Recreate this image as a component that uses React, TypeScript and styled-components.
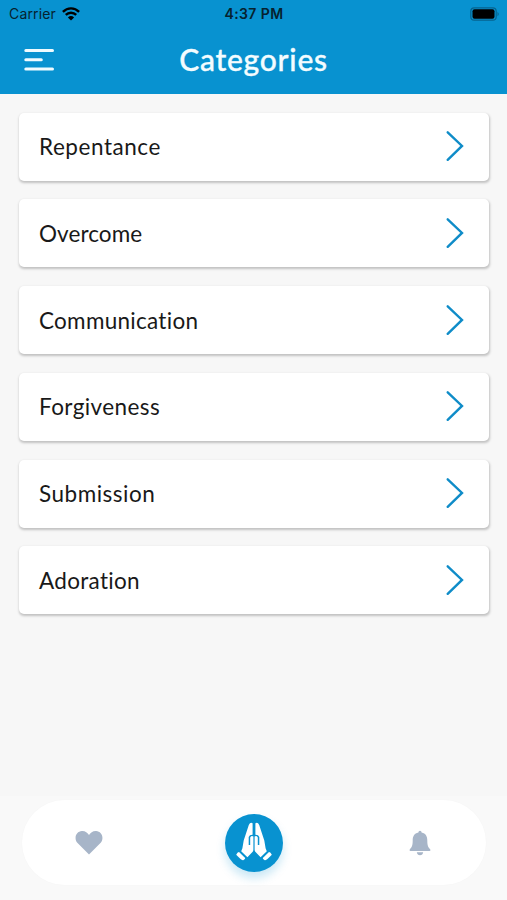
import React from 'react';
import styled, { createGlobalStyle } from 'styled-components';

const GlobalStyle = createGlobalStyle`
  * { box-sizing: border-box; }
  body { margin: 0; background: #f7f7f7; }
`;

const Screen = styled.div`
  display: flex;
  flex-direction: column;
  width: 100%;
  height: 900px;
  background: #f7f7f7;
  font-family: Lato, sans-serif;
  overflow: hidden;
`;

const Header = styled.header`
  height: 93.5px;
  flex: none;
  background: #0892d0;
`;

const StatusBar = styled.div`
  display: grid;
  grid-template-columns: 1fr auto 1fr;
  align-items: center;
  height: 27px;
  padding: 0 8px 0 9px;
  font-family: Inter, sans-serif;
  color: #06222f;
`;

const Carrier = styled.div`
  display: flex;
  align-items: center;
  gap: 6px;
  font-size: 14px;
  letter-spacing: 0.15px;
`;

const Clock = styled.div`
  font-size: 14px;
  font-weight: 600;
  letter-spacing: 0.42px;
`;

const BatteryIcon = styled.svg`
  justify-self: end;
`;

const TitleBar = styled.div`
  display: grid;
  grid-template-columns: 60px 1fr 60px;
  align-items: center;
  height: 65px;
`;

const MenuButton = styled.button`
  display: flex;
  padding: 0 0 0 24px;
  border: 0;
  background: none;
`;

const Title = styled.h1`
  margin: 0;
  padding-bottom: 1px;
  text-align: center;
  color: #f3fcff;
  font-size: 30px;
  line-height: 36px;
  font-weight: 500;
  letter-spacing: 0.75px;
  -webkit-text-stroke: 0.35px #f3fcff;
`;

const List = styled.main`
  display: flex;
  flex: 1;
  flex-direction: column;
  gap: 18.75px;
  padding: 19px 18.5px 0 19px;
`;

const Card = styled.div`
  display: flex;
  align-items: center;
  justify-content: space-between;
  height: 68px;
  flex: none;
  padding: 0 24px 1px 20px;
  border-radius: 5px;
  background: #fff;
  box-shadow: 0.5px 1.5px 2.5px rgba(0, 0, 0, 0.22);
`;

const Label = styled.span<{ $tracking: number }>`
  padding-top: 2px;
  color: #191919;
  font-size: 22.5px;
  line-height: 28px;
  letter-spacing: ${(p) => p.$tracking}px;
`;

const Footer = styled.footer`
  height: 104px;
  flex: none;
  padding: 4px 21px 0 22px;
  background: #f9f9f9;
`;

const TabBar = styled.nav`
  display: grid;
  grid-template-columns: 134px 1fr 133px;
  align-items: center;
  justify-items: center;
  height: 85px;
  border-radius: 43px;
  background: #fff;
  box-shadow: 0 0 2px rgba(0, 0, 0, 0.025);
`;

const PrayButton = styled.div`
  display: flex;
  width: 58px;
  height: 58px;
  margin-right: 1px;
  border-radius: 50%;
  background: #0892d0;
  box-shadow: 0 6px 10px rgba(8, 146, 208, 0.22);
`;

const categories = [
  { name: 'Repentance', tracking: 0.55 },
  { name: 'Overcome', tracking: 0.08 },
  { name: 'Communication', tracking: 0.28 },
  { name: 'Forgiveness', tracking: 0.4 },
  { name: 'Submission', tracking: 0.5 },
  { name: 'Adoration', tracking: 0.3 },
];

const Wifi = () => (
  <svg width="18" height="14" viewBox="0 0 18 14">
    <g fill="none" stroke="#000" strokeWidth="2.4">
      <path d="M.9 4.8C5.5.2 12.500.2 17.100 4.800" />
      <path d="M3.800 7.900C6.700 5 11.300 5 14.200 7.900" />
    </g>
    <path d="M9 13.500 5.900 10.400Q9 7.700 12.100 10.400Z" fill="#000" />
  </svg>
);

const Battery = () => (
  <BatteryIcon width="30" height="14" viewBox="0 0 30 14">
    <rect x="1.800" y=".8" width="25.400" height="12.400" rx="3.500" fill="none" stroke="#06638e" strokeWidth="1.200" />
    <rect x="3.500" y="2.300" width="22" height="9.400" rx="2" fill="#000" />
    <path d="M28.500 4.700Q31 7 28.500 9.300Z" fill="#06638e" />
  </BatteryIcon>
);

const Chevron = () => (
  <svg width="20" height="32" viewBox="0 0 20 32">
    <path d="M2.700 2.300 17 15.900 2.700 29.800" fill="none" stroke="#0f8cc8" strokeWidth="2.400" strokeLinecap="round" strokeLinejoin="miter" />
  </svg>
);

const Praying = () => (
  <svg width="58" height="58" viewBox="0 0 58 58">
    <g fill="#fff">
      <path d="M27.600 9.200Q25.200 8 23.800 11L18.700 26.500 17.400 34.200 16.200 37.200 22.400 43.300 27.700 37.700Q28.400 37 28.400 35.500V22.500Q26.400 21.300 25.200 23.500V31H23.700V23Q24.500 20.600 27.600 20.700Z" />
      <path d="M30.400 9.200Q32.800 8 34.200 11L39.300 26.500 40.600 34.200 41.800 37.200 35.600 43.300 30.300 37.700Q29.600 37 29.600 35.500V22.500Q31.600 21.300 32.800 23.500V31H34.300V23Q33.500 20.600 30.400 20.700Z" />
      <path d="M11.200 40.700Q12.700 37.600 14.300 38.200L20.200 43.900Q20.600 44.900 18.200 46.300 16.800 46.600 11.200 40.700Z" />
      <path d="M46.800 40.700Q45.300 37.600 43.700 38.200L37.800 43.900Q37.400 44.900 39.800 46.300 41.200 46.600 46.800 40.700Z" />
    </g>
  </svg>
);

export default function App() {
  return (
    <>
      <GlobalStyle />
      <Screen>
        <Header>
          <StatusBar>
            <Carrier>Carrier<Wifi /></Carrier>
            <Clock>4:37 PM</Clock>
            <Battery />
          </StatusBar>
          <TitleBar>
            <MenuButton aria-label="Menu">
              <svg width="30" height="24" viewBox="0 0 30 24">
                <path d="M1.800 2.500H28.500M1.800 11.700H17.300M1.800 21H28.500" fill="none" stroke="#effbff" strokeWidth="3" strokeLinecap="round" />
              </svg>
            </MenuButton>
            <Title>Categories</Title>
          </TitleBar>
        </Header>
        <List>
          {categories.map(({ name, tracking }) => (
            <Card key={name}>
              <Label $tracking={tracking}>{name}</Label>
              <Chevron />
            </Card>
          ))}
        </List>
        <Footer>
          <TabBar>
            <svg width="28" height="26" viewBox="0 0 28 26">
              <path d="M14 24.500 2.300 12.700C-1.500 8 1.300 1.300 6.900 1.100 10.200.9 12.500 3 14 5.100 15.500 3 17.800.9 21.100 1.100 26.700 1.300 29.500 8 25.700 12.700Z" fill="#a7b5c8" />
            </svg>
            <PrayButton><Praying /></PrayButton>
            <svg width="22" height="26" viewBox="0 0 22 26">
              <path d="M11 .8Q12.600.8 12.600 2.600C16.800 3.500 18.300 6.500 18.300 10.500 18.300 15.500 19.200 17.300 21.200 19.200Q22 21 20.600 21H1.400Q0 21 .8 19.200C2.800 17.300 3.700 15.500 3.700 10.500 3.700 6.500 5.200 3.500 9.400 2.600Q9.400.8 11 .8ZM7.800 22.300H14.200Q13.700 25.300 11 25.300T7.800 22.300Z" fill="#a7b5c8" />
            </svg>
          </TabBar>
        </Footer>
      </Screen>
    </>
  );
}
